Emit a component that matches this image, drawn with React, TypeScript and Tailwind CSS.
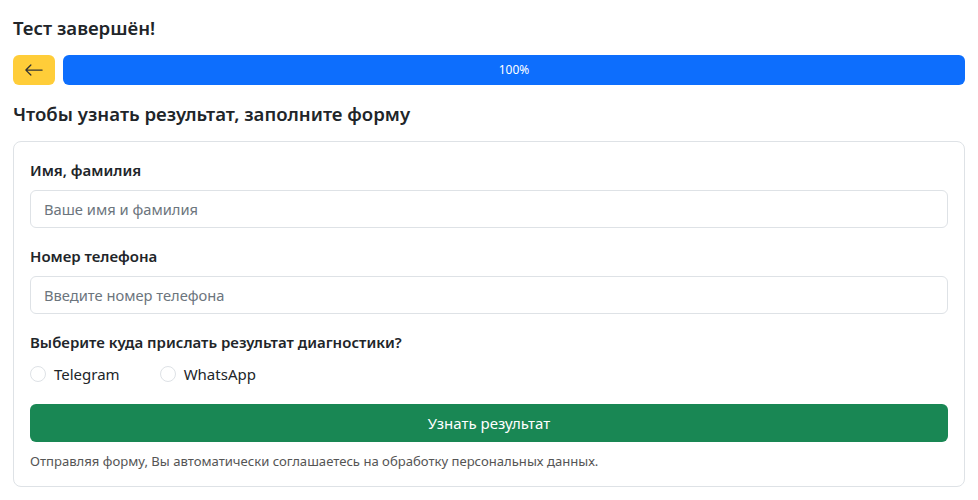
import { useState } from "react";

export default function App() {
  const [name, setName] = useState("");
  const [phone, setPhone] = useState("");
  const [channel, setChannel] = useState("");
  const progress = 100;

  return (
    <div
      className="min-h-screen bg-white px-[13px] pt-[14px] text-[#212529]"
      style={{ fontFamily: '"Noto Sans", "Open Sans", sans-serif' }}
    >
      <h1 className="text-[18.6px] font-semibold leading-[28px]">Тест завершён!</h1>

      <div className="mt-[13px] flex items-center gap-2">
        <button
          type="button"
          className="flex h-[30px] w-[42px] shrink-0 items-center justify-center rounded-[6px] bg-[#ffcd39] text-[#333]"
        >
          <svg width="20" height="20" viewBox="0 0 16 16" fill="currentColor">
            <path
              fillRule="evenodd"
              d="M15 8a.5.5 0 0 0-.5-.5H2.707l3.147-3.146a.5.5 0 1 0-.708-.708l-4 4a.5.5 0 0 0 0 .708l4 4a.5.5 0 0 0 .708-.708L2.707 8.5H14.5A.5.5 0 0 0 15 8"
            />
          </svg>
        </button>
        <div className="h-[30px] flex-1 overflow-hidden rounded-[6px] bg-[#e9ecef]">
          <div
            className="flex h-full items-center justify-center bg-[#0d6efd] text-[12px] text-white"
            style={{ width: `${progress}%` }}
          >
            {progress}%
          </div>
        </div>
      </div>

      <h2 className="mt-[15px] text-[18.6px] font-semibold leading-[28px]">
        Чтобы узнать результат, заполните форму
      </h2>

      <form className="mt-[13px] rounded-[8px] border border-[#dee2e6] px-4 pb-[15px] pt-[16px]">
        <label className="block text-[15px] font-semibold leading-[24px]">Имя, фамилия</label>
        <input
          value={name}
          onChange={(e) => setName(e.target.value)}
          placeholder="Ваше имя и фамилия"
          className="mt-[8px] block h-[38px] w-full rounded-[6px] border border-[#dee2e6] px-[13px] text-[14.7px] placeholder:text-[#6c757d] focus:outline-none"
        />

        <label className="mt-[16px] block text-[15px] font-semibold leading-[24px]">Номер телефона</label>
        <input
          value={phone}
          onChange={(e) => setPhone(e.target.value)}
          placeholder="Введите номер телефона"
          className="mt-[8px] block h-[38px] w-full rounded-[6px] border border-[#dee2e6] px-[13px] text-[14.7px] placeholder:text-[#6c757d] focus:outline-none"
        />

        <p className="mt-[16px] text-[15px] font-semibold leading-[24px]">
          Выберите куда прислать результат диагностики?
        </p>
        <div className="mt-[8px] flex items-center gap-[40px]">
          {["Telegram", "WhatsApp"].map((c) => (
            <label key={c} className="flex items-center gap-[8px] text-[15px] leading-[24px]">
              <input
                type="radio"
                name="channel"
                checked={channel === c}
                onChange={() => setChannel(c)}
                className="h-4 w-4 appearance-none rounded-full border border-[#dee2e6] bg-white checked:border-[#0d6efd] checked:bg-[#0d6efd]"
              />
              {c}
            </label>
          ))}
        </div>

        <button
          type="button"
          className="mt-[18px] block h-[38px] w-full rounded-[6px] bg-[#198754] text-[15px] text-white"
        >
          Узнать результат
        </button>

        <p className="mt-[9px] text-[13.1px] leading-[20px] text-[#555]">
          Отправляя форму, Вы автоматически соглашаетесь на обработку персональных данных.
        </p>
      </form>
    </div>
  );
}
